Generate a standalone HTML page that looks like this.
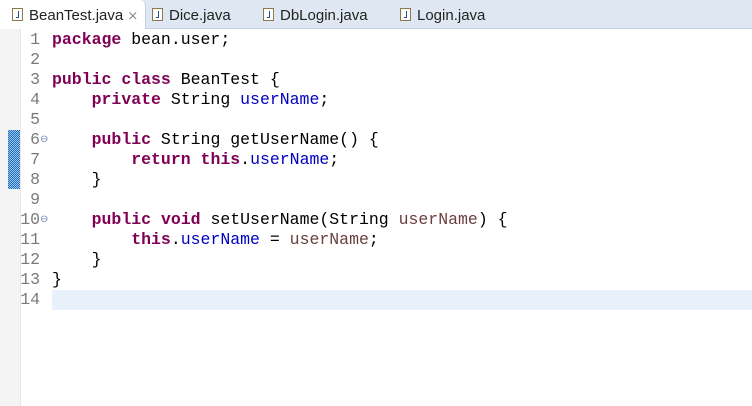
<!DOCTYPE html>
<html><head><style>
body{margin:0;width:752px;height:406px;background:#fff;overflow:hidden;position:relative;font-family:"Liberation Sans",sans-serif}
.tabs{position:absolute;left:0;top:0;width:752px;height:28px;background:#dfe8f2;border-bottom:1px solid #c5d1de}
.tab{position:absolute;top:6px;font-size:15px;color:#222;height:20px;line-height:20px}
.act{position:absolute;left:0;top:0;width:145px;height:29px;background:#fff;border-radius:0 6px 0 0;border-right:1px solid #c5d1de}
.ic{display:inline-block;width:9px;height:11px;border:1px solid #8c7a4a;background:#fff;vertical-align:-1px;margin-right:6px;position:relative}
.ic:after{content:"";position:absolute;left:3px;top:2px;width:2px;height:6px;border-right:1px solid #2a4e8a;border-bottom:1px solid #2a4e8a}
.gut{position:absolute;left:0;top:29px;width:20px;height:377px;background:#f4f4f4;border-right:1px solid #e6e6e6}
.chg{position:absolute;left:8px;top:130px;width:12px;height:59px;background:repeating-conic-gradient(#1f6fc0 0 25%,#9cc4ea 0 50%) 0 0/2px 2px}
.ln{position:absolute;left:20px;top:30px;width:20px;text-align:right;font:16.5px/20px "Liberation Mono",monospace;color:#7a7a7a;white-space:pre}
.fold{position:absolute;left:40px;font-size:10px;color:#6a88b0}
.cur{position:absolute;left:52px;top:290px;width:700px;height:20px;background:#e8f0fb}
pre{position:absolute;left:52px;top:30px;margin:0;font:16.5px/20px "Liberation Mono",monospace;color:#000}
b{color:#7f0055}
.f{color:#0000c0}
.p{color:#6a3e3e}
</style></head><body>
<div class="tabs">
<div class="act"></div>
<div class="tab" style="left:12px"><span class="ic"></span>BeanTest.java <span style="color:#888;font-size:13px">&#x2A2F;</span></div>
<div class="tab" style="left:152px"><span class="ic"></span>Dice.java</div>
<div class="tab" style="left:263px"><span class="ic"></span>DbLogin.java</div>
<div class="tab" style="left:400px"><span class="ic"></span>Login.java</div>
</div>
<div class="gut"></div><div class="chg"></div>
<div class="cur"></div>
<div class="ln">1
2
3
4
5
6
7
8
9
10
11
12
13
14</div>
<div class="fold" style="top:134px">&#x2296;</div>
<div class="fold" style="top:214px">&#x2296;</div>
<pre><b>package</b> bean.user;

<b>public</b> <b>class</b> BeanTest {
    <b>private</b> String <span class="f">userName</span>;

    <b>public</b> String getUserName() {
        <b>return</b> <b>this</b>.<span class="f">userName</span>;
    }

    <b>public</b> <b>void</b> setUserName(String <span class="p">userName</span>) {
        <b>this</b>.<span class="f">userName</span> = <span class="p">userName</span>;
    }
}
</pre>
</body></html>
